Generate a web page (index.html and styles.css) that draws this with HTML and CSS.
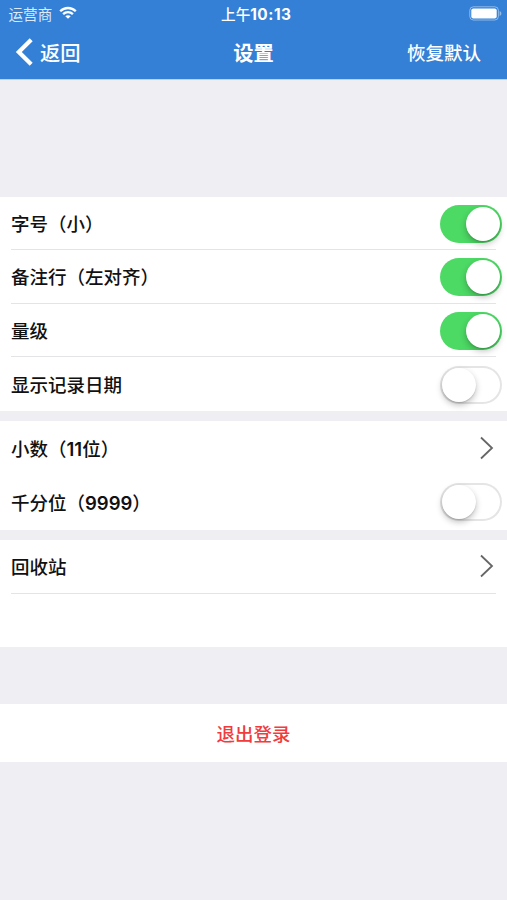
FILE: index.html
```html
<!DOCTYPE html>
<html lang="zh-CN">
<head>
  <meta charset="UTF-8">
  <meta name="viewport" content="width=device-width, initial-scale=1.0">
  <title>设置</title>
  <link rel="stylesheet" href="styles.css">
</head>
<body>
  <header class="header">
    <div class="status">
      <div class="carrier">
        <span>运营商</span>
        <svg class="wifi" width="18" height="14" viewBox="0 0 18 14" fill="none" stroke="#fff" stroke-width="2.3">
          <path d="M1.2 5.2C5.6 .9 12.4 .9 16.8 5.2"/>
          <path d="M4.1 8.2c2.8-2.7 7-2.7 9.8 0"/>
          <path d="M9 12.8 6.3 10.2c1.5-1.4 3.9-1.4 5.4 0z" fill="#fff" stroke="none"/>
        </svg>
      </div>
      <div class="time">上午<b>10:13</b></div>
      <svg class="battery" width="33" height="15" viewBox="0 0 33 15">
        <rect x=".8" y=".8" width="28.6" height="13.2" rx="3.6" fill="none" stroke="#fff" stroke-opacity=".45"/>
        <rect x="2.3" y="2.4" width="25.4" height="10" rx="2" fill="#fff"/>
        <path d="M30.6 5v5c1.2-.5 1.8-1.4 1.8-2.5S31.8 5.5 30.6 5z" fill="#fff" fill-opacity=".45"/>
      </svg>
    </div>
    <nav class="navbar">
      <a class="back">
        <svg width="18" height="28" viewBox="0 0 18 28" fill="none" stroke="#fff" stroke-width="4.2">
          <path d="M16.2 1.8 3.8 14l12.4 12.2"/>
        </svg>
        <span>返回</span>
      </a>
      <h1 class="title">设置</h1>
      <a class="reset">恢复默认</a>
    </nav>
  </header>

  <main>
    <section class="group display">
      <div class="row line"><span>字号（小）</span><i class="switch on"></i></div>
      <div class="row line"><span>备注行（左对齐）</span><i class="switch on"></i></div>
      <div class="row line"><span>量级</span><i class="switch on"></i></div>
      <div class="row"><span>显示记录日期</span><i class="switch"></i></div>
    </section>

    <section class="group number">
      <div class="row">
        <span>小数（<b>11</b>位）</span>
        <svg class="arrow" width="14" height="24" viewBox="0 0 14 24"><path d="M1 1.5 12 12 1 22.5"/></svg>
      </div>
      <div class="row"><span>千分位（<b>9999</b>）</span><i class="switch"></i></div>
    </section>

    <section class="group trash">
      <div class="row line">
        <span>回收站</span>
        <svg class="arrow" width="14" height="24" viewBox="0 0 14 24"><path d="M1 1.5 12 12 1 22.5"/></svg>
      </div>
      <div class="row"></div>
    </section>

    <div class="logout">退出登录</div>
  </main>
</body>
</html>
```

FILE: styles.css
```css
* {
  box-sizing: border-box;
}
body {
  margin: 0;
  background: #eeeef3;
  color: #111;
  font-family: Inter, "Noto Sans CJK SC", sans-serif;
  font-size: 18.5px;
  font-weight: 500;
}
b {
  font-weight: 600;
}
.header {
  height: 80px;
  background: #3380d6;
  border-bottom: 1px solid #b5d5f6;
  color: #fff;
}
.status {
  display: grid;
  grid-template-columns: 1fr auto 1fr;
  align-items: center;
  height: 26px;
  padding: 0 5px 0 8.5px;
  font-size: 14.6px;
}
.carrier {
  display: flex;
  align-items: center;
  gap: 7px;
  font-weight: 400;
  color: #dceafa;
}
.time {
  padding-left: 2px;
}
.time b {
  font-weight: 700;
  font-size: 15.4px;
  letter-spacing: 0.5px;
}
.battery {
  justify-self: end;
}
.navbar {
  display: grid;
  grid-template-columns: 1fr auto 1fr;
  align-items: center;
  height: 51px;
  padding: 0 26px 0 15px;
}
.back {
  display: flex;
  align-items: center;
  gap: 7px;
  font-size: 20.3px;
}
.title {
  margin: 0;
  padding-left: 11px;
  font-size: 20.3px;
  font-weight: 600;
}
.reset {
  justify-self: end;
}
.group {
  background: #fff;
}
.display {
  margin-top: 117px;
  height: 214px;
}
.number {
  margin-top: 10px;
  height: 109px;
}
.trash {
  margin-top: 10px;
  height: 107px;
}
.row {
  display: flex;
  align-items: center;
  justify-content: space-between;
  height: 53.7px;
  margin: 0 11px;
}
.display .row:first-child {
  height: 53px;
}
.line {
  border-bottom: 1.5px solid #e4e4e6;
}
.switch {
  width: 62px;
  height: 38px;
  margin-right: -6px;
  padding: 2px;
  border-radius: 19px;
  background: #fff;
  box-shadow: inset 0 0 0 2px #e5e5e5;
}
.display .switch {
  margin-top: 2px;
}
.switch::before {
  content: "";
  display: block;
  width: 34px;
  height: 34px;
  border-radius: 50%;
  background: #fff;
  box-shadow: 0 3px 6px rgba(0,0,0,0.25), 0 1px 1px rgba(0,0,0,0.12);
}
.switch.on {
  background: #4cd964;
  box-shadow: none;
}
.switch.on::before {
  margin-left: 24px;
}
.arrow {
  margin-right: 2px;
  fill: none;
  stroke: #666;
  stroke-width: 1.8;
}
.logout {
  display: flex;
  align-items: center;
  justify-content: center;
  height: 58px;
  margin-top: 57px;
  background: #fff;
  color: #f03c3c;
}
```
